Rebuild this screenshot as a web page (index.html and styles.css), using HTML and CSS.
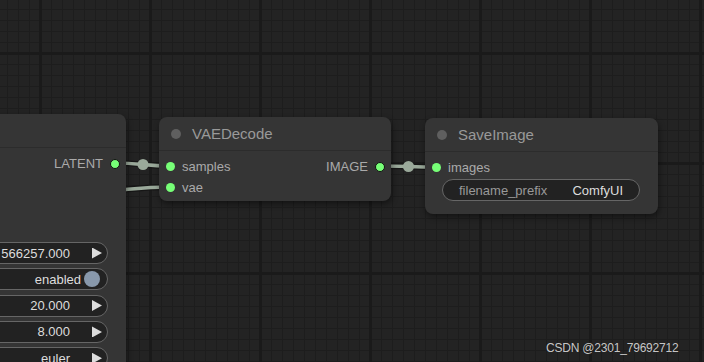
FILE: index.html
```html
<!DOCTYPE html>
<html lang="en">
<head>
  <meta charset="UTF-8" />
  <meta name="viewport" content="width=device-width, initial-scale=1.0"/>
  <title>ComfyUI | Graph</title>
  <link rel="stylesheet" href="styles.css">
</head>
<body>
  <div class="canvas">
    <svg class="links" width="704" height="362" viewBox="0 0 704 362">
      <g class="link-shadow">
        <path d="M115 163 C140 163, 145 166, 170 166" />
        <path d="M30 202 C105 193, 128 187, 170 187" />
        <path d="M380 166 C405 166, 412 167, 437 167" />
      </g>
      <g class="link-line">
        <path d="M115 163 C140 163, 145 166, 170 166" />
        <path d="M30 202 C105 193, 128 187, 170 187" />
        <path d="M380 166 C405 166, 412 167, 437 167" />
      </g>
      <circle class="link-mid" cx="143" cy="164.5" r="5.5" />
      <circle class="link-mid" cx="408.5" cy="166.5" r="5.5" />
    </svg>

    <!-- sampler node, mostly off screen -->
    <div class="node node-sampler">
      <div class="node-title"></div>
      <div class="node-body">
        <div class="slot-row">
          <span></span>
          <div class="slot-out">LATENT <span class="dot dot-out"></span></div>
        </div>
        <div class="slot-row"></div>
        <div class="slot-row"></div>
        <div class="slot-row"></div>
        <div class="widgets">
          <div class="widget widget-num"><span>566257.000</span><i class="arrow"></i></div>
          <div class="widget widget-toggle"><span>enabled</span><i class="toggle"></i></div>
          <div class="widget widget-num"><span>20.000</span><i class="arrow"></i></div>
          <div class="widget widget-num"><span>8.000</span><i class="arrow"></i></div>
          <div class="widget widget-num"><span>euler</span><i class="arrow"></i></div>
        </div>
      </div>
    </div>

    <div class="node node-vae">
      <div class="node-title"><span class="title-dot"></span>VAEDecode</div>
      <div class="node-body">
        <div class="slot-row">
          <div class="slot-in"><span class="dot"></span>samples</div>
          <div class="slot-out">IMAGE <span class="dot dot-out"></span></div>
        </div>
        <div class="slot-row">
          <div class="slot-in"><span class="dot"></span>vae</div>
        </div>
      </div>
    </div>

    <div class="node node-save">
      <div class="node-title"><span class="title-dot"></span>SaveImage</div>
      <div class="node-body">
        <div class="slot-row">
          <div class="slot-in"><span class="dot"></span>images</div>
        </div>
        <div class="widget widget-text">
          <span class="label">filename_prefix</span>
          <span class="value">ComfyUI</span>
        </div>
      </div>
    </div>

    <div class="watermark">CSDN @2301_79692712</div>
  </div>
</body>
</html>
```

FILE: styles.css
```css
:root {
  --bg: #232323;
  --grid-minor: #1d1d1d;
  --grid-major: #1a1a1a;
  --node: #353535;
  --slot: #77ff77;
  --link: #9aa99a;
}

* {
  box-sizing: border-box;
  margin: 0;
  padding: 0;
}

body {
  width: 704px;
  height: 362px;
  overflow: hidden;
  background: var(--bg);
  font-family: 'Liberation Sans', Arial, sans-serif;
}

.canvas {
  position: relative;
  width: 704px;
  height: 362px;
  overflow: hidden;
  background-color: var(--bg);
  background-image:
    linear-gradient(90deg, var(--grid-major) 3px, transparent 3px),
    linear-gradient(var(--grid-major) 3px, transparent 3px),
    linear-gradient(90deg, var(--grid-minor) 1px, transparent 1px),
    linear-gradient(var(--grid-minor) 1px, transparent 1px);
  background-size: 110px 110px, 110px 110px, 11px 11px, 11px 11px;
  background-position: 39px 0, 0 52px, 7px 0, 0 9px;
}

.links {
  position: absolute;
  top: 0;
  left: 0;
}

.links path {
  fill: none;
}

.link-shadow path {
  stroke: #161616;
  stroke-width: 6;
}

.link-line path {
  stroke: var(--link);
  stroke-width: 3.5;
}

.link-mid {
  fill: var(--link);
}

/* nodes */
.node {
  position: absolute;
  background: var(--node);
  border-radius: 8px;
  box-shadow: 1px 3px 6px rgba(0, 0, 0, 0.45);
}

.node-sampler {
  left: -120px;
  top: 114px;
  width: 246px;
  height: 300px;
}

.node-vae {
  left: 159px;
  top: 117px;
  width: 232px;
  padding-bottom: 3px;
}

.node-save {
  left: 425px;
  top: 118px;
  width: 233px;
  padding-bottom: 13px;
}

.node-title {
  height: 34px;
  display: flex;
  align-items: center;
  gap: 11px;
  padding-left: 12px;
  border-bottom: 1px solid #2c2c2c;
  color: #999;
  font-size: 15px;
}

.title-dot {
  width: 10px;
  height: 10px;
  border-radius: 50%;
  background: #5f5f5f;
}

.node-body {
  padding-top: 5px;
}

.slot-row {
  height: 21px;
  display: flex;
  align-items: center;
  justify-content: space-between;
  font-size: 13px;
  color: #aaa;
}

.slot-in {
  display: flex;
  align-items: center;
  gap: 7px;
  padding-left: 7px;
}

.slot-out {
  display: flex;
  align-items: center;
  gap: 7px;
  padding-right: 6px;
}

.dot {
  width: 9px;
  height: 9px;
  border-radius: 50%;
  background: var(--slot);
}

.dot-out {
  width: 10px;
  height: 10px;
  border: 1px solid #111;
}

/* widgets */
.widgets {
  display: flex;
  flex-direction: column;
  gap: 4.3px;
  margin-top: 5px;
}

.widget {
  height: 22px;
  border: 1px solid #666;
  border-radius: 11px;
  background: #222;
  display: flex;
  align-items: center;
  font-size: 13px;
  color: #ddd;
  margin: 0 18px 0 17px;
}

.widget-num,
.widget-toggle {
  justify-content: flex-end;
}

.widget-num {
  padding-right: 5px;
}

.arrow {
  width: 10px;
  height: 11px;
  margin-left: 22px;
  background: #ddd;
  clip-path: polygon(0 0, 100% 50%, 0 100%);
}

.widget-toggle {
  padding-right: 7px;
}

.toggle {
  width: 16px;
  height: 16px;
  margin-left: 3px;
  border-radius: 50%;
  background: #8898ab;
}

.widget-text {
  justify-content: space-between;
  margin-top: 1px;
  padding: 0 16px;
}

.widget-text .label {
  color: #999;
}

.watermark {
  position: absolute;
  left: 546px;
  top: 341px;
  font-size: 12px;
  color: rgba(220, 220, 220, 0.9);
  letter-spacing: -0.2px;
}
```
